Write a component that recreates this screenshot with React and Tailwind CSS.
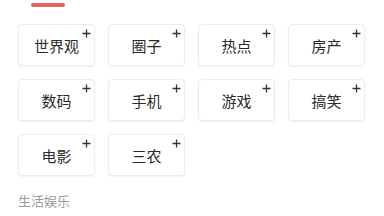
import React from "react";

const rows = [
  ["世界观", "圈子", "热点", "房产"],
  ["数码", "手机", "游戏", "搞笑"],
  ["电影", "三农"],
];

function Card({ label }) {
  return (
    <div className="relative flex h-[42px] w-[77px] items-center justify-center rounded-[4px] border border-[#ececec] bg-white shadow-[0_1px_2px_rgba(0,0,0,0.06)]">
      <span className="text-[15px] leading-none text-[#2a2a2a]">{label}</span>
      <svg
        className="absolute right-[3px] top-[4px]"
        width="9"
        height="9"
        viewBox="0 0 9 9"
      >
        <path d="M4.5 0.5V8.5M0.5 4.5H8.5" stroke="#333" strokeWidth="1.3" fill="none" />
      </svg>
    </div>
  );
}

export default function App() {
  return (
    <div
      className="h-[216px] w-[384px] overflow-hidden bg-white"
      style={{ fontFamily: '"Noto Sans CJK SC", "Noto Sans", sans-serif' }}
    >
      <div className="ml-[31px] mt-[3px] h-[4px] w-[34px] rounded-full bg-[#e46464]" />
      <div className="ml-[18px] mt-[17px] flex flex-col gap-[13px]">
        {rows.map((r, i) => (
          <div key={i} className="flex gap-[13px]">
            {r.map((l) => (
              <Card key={l} label={l} />
            ))}
          </div>
        ))}
      </div>
      <div className="ml-[18px] mt-[18px] text-[13px] leading-none text-[#9a9a9a]">生活娱乐</div>
    </div>
  );
}
